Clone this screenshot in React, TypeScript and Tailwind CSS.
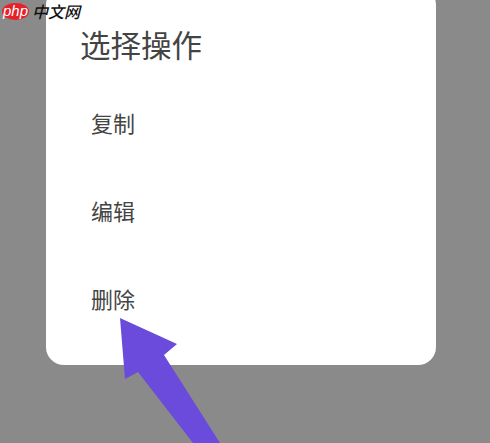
import React from 'react';

const actions = ['复制', '编辑', '删除'];

function PhpLogo() {
  return (
    <div className="absolute left-0 top-[2px] flex items-center">
      <div className="ml-[2px] flex h-[17px] w-[27px] items-center justify-center rounded-[50%] bg-[#e8202a]">
        <span className="pb-[2px] font-['Liberation_Sans',sans-serif] text-[15px] italic leading-none text-white">php</span>
      </div>
      <span className="ml-[3px] font-['Noto_Sans_CJK_SC',sans-serif] text-[16px] font-medium italic leading-[18px] text-[#111]">中文网</span>
    </div>
  );
}

function Arrow() {
  return (
    <svg className="absolute left-0 top-0" width="490" height="443" viewBox="0 0 490 443">
      <polygon
        points="120,318 177,344 164,355 220,443 193,443 138,372 125,379"
        fill="#6a4bdb"
      />
    </svg>
  );
}

export default function App() {
  return (
    <div className="relative h-[443px] w-[490px] overflow-hidden bg-[#8a8a8a] font-['Noto_Sans_CJK_SC',sans-serif]">
      <div className="ml-[46px] -mt-[13px] flex h-[378px] w-[390px] flex-col rounded-[18px] bg-white">
        <div className="flex h-[91px] items-end pb-[12px] pl-[34px]">
          <span className="text-[30.5px] leading-[44px] text-[#444]">选择操作</span>
        </div>
        {actions.map((label) => (
          <div key={label} className="flex h-[88px] items-center pl-[45px]">
            <span className="text-[22px] leading-none text-[#444]">{label}</span>
          </div>
        ))}
      </div>
      <Arrow />
      <PhpLogo />
    </div>
  );
}
